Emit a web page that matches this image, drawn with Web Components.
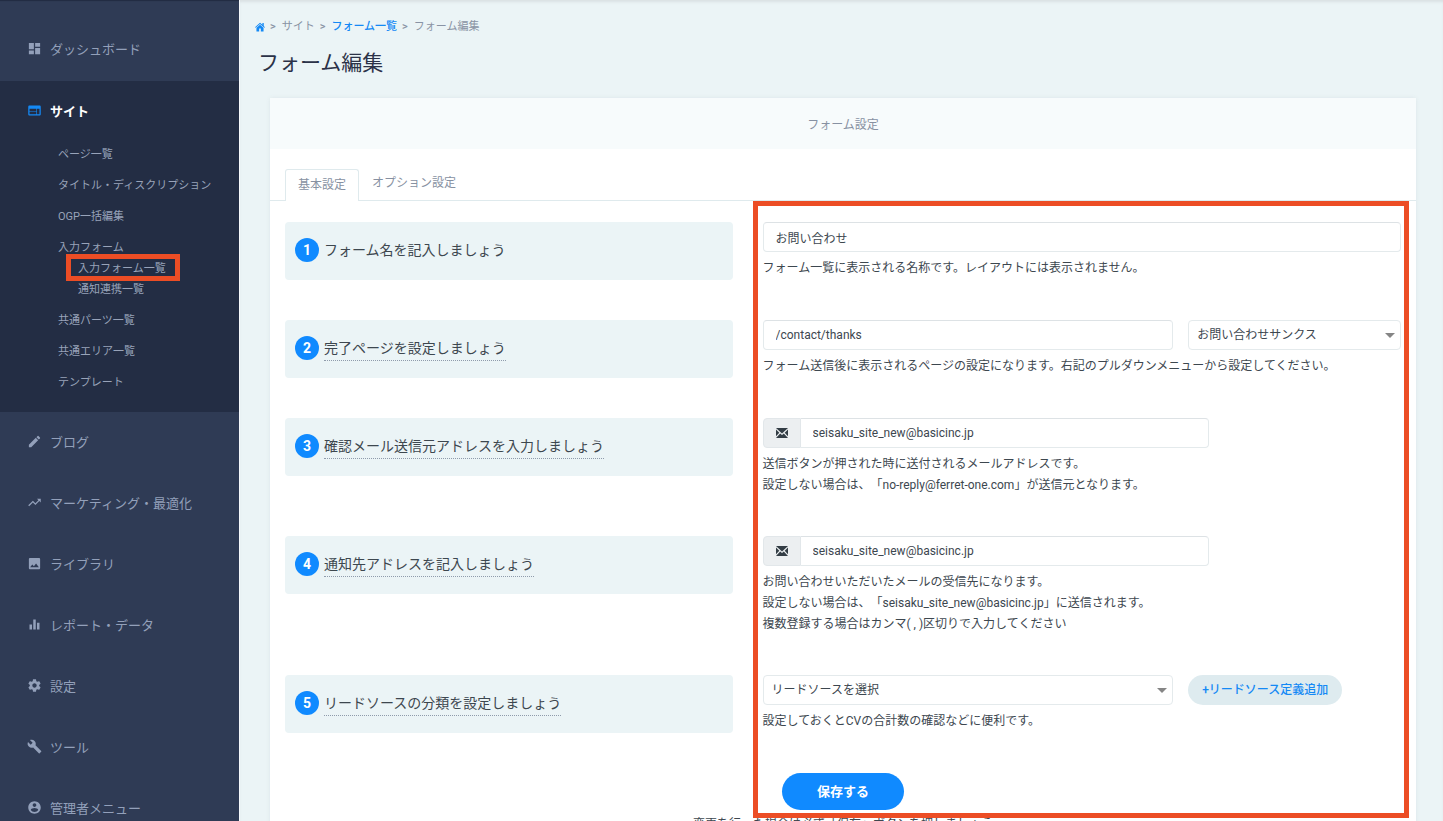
<!DOCTYPE html>
<html lang="ja">
<head>
<meta charset="utf-8">
<title>フォーム編集</title>
<style>
html, body { margin: 0; height: 100%; }
body { font: 12px/21px Roboto, "Noto Sans CJK JP", sans-serif; text-spacing-trim: space-all; color: #3d474f; background: #ebf4f6; overflow: hidden; }
</style>
</head>
<body>
<app-shell>
  <side-nav slot="nav">
    <nav-item icon="dashboard" label="ダッシュボード" first></nav-item>
    <nav-item icon="web" label="サイト" open>
      <nav-link>ページ一覧</nav-link>
      <nav-link>タイトル・ディスクリプション</nav-link>
      <nav-link>OGP一括編集</nav-link>
      <nav-link>入力フォーム
        <nav-link slot="children" nested marked>入力フォーム一覧</nav-link>
        <nav-link slot="children" nested>通知連携一覧</nav-link>
      </nav-link>
      <nav-link>共通パーツ一覧</nav-link>
      <nav-link>共通エリア一覧</nav-link>
      <nav-link>テンプレート</nav-link>
    </nav-item>
    <nav-item icon="edit" label="ブログ"></nav-item>
    <nav-item icon="trend" label="マーケティング・最適化"></nav-item>
    <nav-item icon="photo" label="ライブラリ"></nav-item>
    <nav-item icon="bars" label="レポート・データ"></nav-item>
    <nav-item icon="gear" label="設定"></nav-item>
    <nav-item icon="wrench" label="ツール"></nav-item>
    <nav-item icon="person" label="管理者メニュー"></nav-item>
  </side-nav>
  <page-head></page-head>
  <settings-card heading="フォーム設定">
    <form-step num="1" label="フォーム名を記入しましょう" kind="text" value="お問い合わせ">フォーム一覧に表示される名称です。レイアウトには表示されません。</form-step>
    <form-step num="2" label="完了ページを設定しましょう" kind="text" value="/contact/thanks" hinted split>
      <choice-box slot="side" name="完了ページ" value="お問い合わせサンクス"></choice-box>フォーム送信後に表示されるページの設定になります。右記のプルダウンメニューから設定してください。</form-step>
    <form-step num="3" label="確認メール送信元アドレスを入力しましょう" kind="mail" value="seisaku_site_new@basicinc.jp" hinted>送信ボタンが押された時に送付されるメールアドレスです。<br>設定しない場合は、「no-reply@ferret-one.com」が送信元となります。</form-step>
    <form-step num="4" label="通知先アドレスを記入しましょう" kind="mail" value="seisaku_site_new@basicinc.jp" hinted>お問い合わせいただいたメールの受信先になります。<br>設定しない場合は、「seisaku_site_new@basicinc.jp」に送信されます。<br>複数登録する場合はカンマ( , )区切りで入力してください</form-step>
    <form-step num="5" label="リードソースの分類を設定しましょう" kind="select" value="リードソースを選択" hinted split>
      <pill-button slot="side" tone="soft">+リードソース定義追加</pill-button>設定しておくとCVの合計数の確認などに便利です。</form-step>
    <pill-button slot="action">保存する</pill-button>
    <span slot="note">変更を行った場合は必ず「保存」ボタンを押しましょう</span>
  </settings-card>
</app-shell>

<script>
const ICONS = {
  dashboard: 'M3 13h8V3H3v10zm0 8h8v-6H3v6zm10 0h8V11h-8v10zm0-18v6h8V3h-8z',
  web: 'M20 4H4c-1.1 0-2 .9-2 2v12c0 1.1.9 2 2 2h16c1.1 0 2-.9 2-2V6c0-1.1-.9-2-2-2zm-5 14H4v-4h11v4zm0-5H4V9h11v4zm5 5h-4V9h4v9z',
  edit: 'M3 17.25V21h3.75L17.81 9.94l-3.75-3.75L3 17.25zM20.71 7.04a1 1 0 0 0 0-1.41l-2.34-2.34a1 1 0 0 0-1.41 0l-1.83 1.83 3.75 3.75 1.83-1.83z',
  trend: 'M16 6l2.29 2.29-4.88 4.88-4-4L2 16.59 3.41 18l6-6 4 4 6.3-6.29L22 12V6z',
  photo: 'M21 19V5c0-1.1-.9-2-2-2H5c-1.1 0-2 .9-2 2v14c0 1.1.9 2 2 2h14c1.1 0 2-.9 2-2zM8.5 13.5l2.5 3.01L14.5 12l4.5 6H5l3.5-4.5z',
  bars: 'M10 20h4V4h-4v16zm-6 0h4v-8H4v8zM16 9v11h4V9h-4z',
  gear: 'M19.43 12.98c.04-.32.07-.64.07-.98s-.03-.66-.07-.98l2.11-1.65c.19-.15.24-.42.12-.64l-2-3.46c-.12-.22-.39-.3-.61-.22l-2.49 1c-.52-.4-1.08-.73-1.69-.98l-.38-2.65A.488.488 0 0 0 14 2h-4c-.25 0-.46.18-.49.42l-.38 2.65c-.61.25-1.17.59-1.69.98l-2.49-1c-.23-.09-.49 0-.61.22l-2 3.46c-.13.22-.07.49.12.64l2.11 1.65c-.04.32-.07.65-.07.98s.03.66.07.98l-2.11 1.65c-.19.15-.24.42-.12.64l2 3.46c.12.22.39.3.61.22l2.49-1c.52.4 1.08.73 1.69.98l.38 2.65c.03.24.24.42.49.42h4c.25 0 .46-.18.49-.42l.38-2.65c.61-.25 1.17-.59 1.69-.98l2.49 1c.23.09.49 0 .61-.22l2-3.46c.12-.22.07-.49-.12-.64l-2.11-1.65zM12 15.5c-1.93 0-3.5-1.57-3.5-3.5s1.57-3.5 3.5-3.5 3.5 1.57 3.5 3.5-1.57 3.5-3.5 3.5z',
  wrench: 'M22.7 19l-9.1-9.1c.9-2.3.4-5-1.5-6.9-2-2-5-2.4-7.4-1.3L9 6 6 9 1.6 4.7C.4 7.1.9 10.1 2.9 12.1c1.9 1.9 4.6 2.4 6.9 1.5l9.1 9.1c.4.4 1 .4 1.4 0l2.3-2.3c.5-.4.5-1.1.1-1.4z',
  person: 'M12 2C6.48 2 2 6.48 2 12s4.48 10 10 10 10-4.48 10-10S17.52 2 12 2zm0 3c1.66 0 3 1.34 3 3s-1.34 3-3 3-3-1.34-3-3 1.34-3 3-3zm0 14.2c-2.5 0-4.71-1.28-6-3.22.03-1.99 4-3.08 6-3.08 1.99 0 5.97 1.09 6 3.08-1.29 1.94-3.5 3.22-6 3.22z',
  home: 'M11.3 2.200L0 12.400l1.500 1.600L12 4.600l10.500 9.400 1.500-1.600-3-2.700V2.500h-3.200v4.300l-5-4.600a1 1 0 0 0-1.500 0zM12 6.400l-8.500 7.600V22.500h6.500v-7h4v7h6.500V14z'
};
const svg = (name, size) => `<svg width="${size}" height="${size}" viewBox="0 0 24 24" fill="currentColor" aria-hidden="true"><path d="${ICONS[name]}"/></svg>`;

const CONTROL_CSS = `
  *, *::before, *::after { box-sizing: border-box; }
  input, select { display: block; width: 100%; height: 30px; margin: 0; font: inherit; color: inherit;
    background: #fff; border: 1px solid #e4eaec; border-radius: 4px; outline: 0; appearance: none; }
  input { padding: 0 12px; border-top-color: #dde2e5; }
  select { padding: 0 24px 0 8px; }
  .pick { position: relative; display: block; }
  .pick::after { content: ""; position: absolute; right: 6px; top: 13px; pointer-events: none;
    border: 5px solid transparent; border-top-color: #858585; border-bottom-width: 0; }
`;

class Base extends HTMLElement {
  connectedCallback() {
    if (!this.shadowRoot) this.attachShadow({ mode: 'open' }).innerHTML = this.view();
  }
  at(name) { return this.getAttribute(name) || ''; }
}

customElements.define('app-shell', class extends Base {
  view() { return `
    <style>
      :host { display: grid; grid-template-columns: 239px minmax(0, 1fr); height: 100vh; overflow: hidden; }
      main { border-left: 1px solid #f6f9fc; padding: 0 27px 0 15px; box-shadow: inset 0 3px 3px -1px #d9e0e3; }
    </style>
    <slot name="nav"></slot>
    <main><slot></slot></main>`; }
});

customElements.define('side-nav', class extends Base {
  view() { return `
    <style>
      :host { display: block; background: #2f3b55; overflow: hidden; box-shadow: inset 0 2px 1px -1px #222c42; }
    </style>
    <nav aria-label="メイン"><slot></slot></nav>`; }
});

customElements.define('nav-item', class extends Base {
  view() { return `
    <style>
      :host { display: block; color: #93a0ba; }
      :host([first]) { padding: 19px 0 1px; }
      :host([open]) { background: #232d44; padding-bottom: 14px; }
      .top { display: flex; align-items: center; gap: 8px; padding: 20px 0 20px 27px; font-size: 13px; color: inherit; text-decoration: none; }
      svg { display: block; margin-bottom: 3px; }
      :host([open]) .top { color: #fff; font-weight: 700; padding-bottom: 17px; }
      :host([open]) svg { color: #1489f5; }
    </style>
    <a class="top" href="#">${svg(this.at('icon'), 15)}<span>${this.at('label')}</span></a>
    <slot></slot>`; }
});

customElements.define('nav-link', class extends Base {
  view() { return `
    <style>
      :host { display: block; padding: 5px 0 5px 58px; font-size: 11px; line-height: 21px; color: #98a3b9; }
      :host([nested]) { padding: 0 0 0 20px; }
      a { position: relative; display: inline-block; vertical-align: top; color: inherit; text-decoration: none; }
      :host([marked]) a::after { content: ""; position: absolute; inset: -4px -14px -2px -12px; border: 5px solid #ec4d25; pointer-events: none; }
    </style>
    <a href="#"><slot></slot></a><slot name="children"></slot>`; }
});

customElements.define('page-head', class extends Base {
  view() { return `
    <style>
      :host { display: block; padding-top: 16px; }
      ol { display: flex; align-items: center; gap: 5px; margin: 0; padding: 0; list-style: none; font-size: 11px; color: #8993a4; }
      li { display: flex; align-items: center; gap: 6px; }
      li + li::before { content: ">"; font-weight: 500; }
      a { color: #1489f5; font-weight: 500; text-decoration: none; }
      svg { display: block; }
      h1 { margin: 11px 0 20px 3px; font-size: 21px; line-height: 30px; font-weight: 400; color: #2b3248; }
    </style>
    <nav aria-label="パンくず"><ol>
      <li><a href="#" aria-label="ホーム">${svg('home', 10)}</a></li>
      <li>サイト</li><li><a href="#">フォーム一覧</a></li><li>フォーム編集</li>
    </ol></nav>
    <h1>フォーム編集</h1>`; }
});

customElements.define('settings-card', class extends Base {
  view() { return `
    <style>
      :host { display: block; margin-left: 15px; background: #fff; border-radius: 2px; box-shadow: 0 0 4px #dbe5e8; }
      h2 { margin: 0; padding: 17px 0 13px; text-align: center; font-size: 12px; line-height: 21px; font-weight: 400; color: #8791a2; background: #f7fbfc; }
      .tabs { display: flex; align-items: flex-end; padding: 19px 15px 0; border-bottom: 1px solid #dfeaed; }
      .tabs button { margin: 0; padding: 4px 12px 6px; font: inherit; color: #8791a2; background: none; border: 1px solid transparent; border-bottom: 0; }
      .tabs button[aria-selected=true] { margin-bottom: -1px; padding: 5px 12px; border-color: #dfeaed; background: #fff; border-radius: 3px 3px 0 0; }
      form { position: relative; padding: 21px 0 0; }
      form::after { content: ""; position: absolute; top: 0; bottom: -8px; left: calc(100% * 5 / 12 + 5px); right: 7px; border: 5px solid #ec4d25; pointer-events: none; }
      .action { display: flex; justify-content: center; }
      p { margin: 4px 0; text-align: center; }
    </style>
    <h2>${this.at('heading')}</h2>
    <div class="tabs" role="tablist">
      <button type="button" role="tab" aria-selected="true">基本設定</button>
      <button type="button" role="tab" aria-selected="false">オプション設定</button>
    </div>
    <form>
      <slot></slot>
      <div class="action"><slot name="action"></slot></div>
    </form>
    <p><slot name="note"></slot></p>`; }
});

customElements.define('form-step', class extends Base {
  control() {
    const v = this.at('value');
    if (this.at('kind') === 'select') return `<span class="pick"><select id="c"><option>${v}</option></select></span>`;
    if (this.at('kind') === 'mail') return `<div class="group"><span class="addon">
      <svg width="12" height="10" viewBox="0 0 12 10" aria-hidden="true"><path fill="#333d45" d="M0 0h12L6 5.400zM0 1.600L3.300 4.700 0 8.200zM12 1.600v6.600L8.700 4.700zM0 10l4.200-4.500L6 7.100l1.800-1.600L12 10z"/></svg>
      </span><input id="c" type="email" value="${v}"></div>`;
    return `<input id="c" type="text" value="${v}">`;
  }
  view() { return `
    <style>${CONTROL_CSS}
      :host { display: grid; grid-template-columns: 5fr 7fr; align-items: start; margin-bottom: 40px; }
      .title { display: flex; align-items: flex-start; gap: 5px; margin: 0 15px; height: 58px; padding: 16px 10px; background: #ebf4f6; border-radius: 4px; }
      .num { flex: none; width: 24px; border-radius: 50%; background: #108aff; color: #fff; font-size: 14px; line-height: 24px; font-weight: 700; text-align: center; }
      label { font-size: 14px; line-height: 24px; white-space: nowrap; }
      :host([hinted]) label { border-bottom: 1px dotted #8f9bab; }
      .body { padding: 0 15px; min-width: 0; }
      .line { display: grid; grid-template-columns: 1fr; }
      :host([split]) .line { grid-template-columns: 2fr 1fr; }
      :host([split]) .main { padding-right: 15px; }
      .group { display: flex; width: 70%; }
      .group input { border-radius: 0 4px 4px 0; border-left: 0; }
      .addon { flex: none; display: grid; place-items: center; width: 38px; height: 30px; background: #eceff1; border: 1px solid #e2e7ea; border-radius: 4px 0 0 4px; }
      .help { margin-top: 6px; }
    </style>
    <div class="title"><span class="num">${this.at('num')}</span><label for="c">${this.at('label')}</label></div>
    <div class="body">
      <div class="line"><div class="main">${this.control()}</div><slot name="side"></slot></div>
      <div class="help"><slot></slot></div>
    </div>`; }
});

customElements.define('choice-box', class extends Base {
  view() { return `
    <style>${CONTROL_CSS} :host { display: block; }</style>
    <span class="pick"><select aria-label="${this.at('name')}"><option>${this.at('value')}</option></select></span>`; }
});

customElements.define('pill-button', class extends Base {
  view() { return `
    <style>
      :host { display: block; }
      button { display: block; margin: 0; padding: 8px 35px; border: 0; border-radius: 20px; font: 700 13px/21px Roboto, "Noto Sans CJK JP", sans-serif; color: #fff; background: #108aff; white-space: nowrap; }
      :host([tone=soft]) button { padding: 5px 14px; font-size: 12px; font-weight: 500; line-height: 20px; color: #1489f5; background: #deebef; }
    </style>
    <button type="button"><slot></slot></button>`; }
});
</script>
</body>
</html>
